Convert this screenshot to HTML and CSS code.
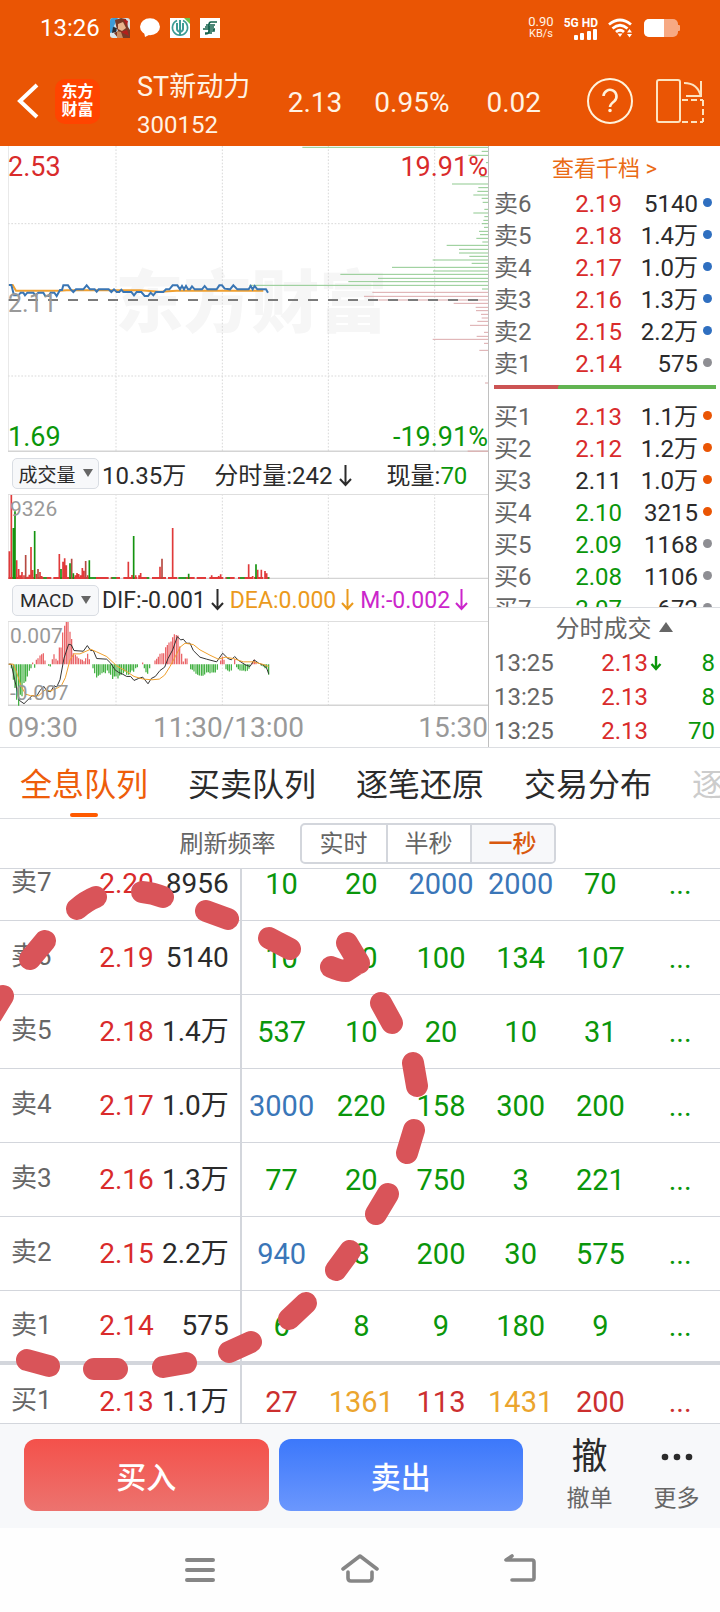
FILE: index.html
```
<!DOCTYPE html>
<html lang="zh-CN">
<head>
<meta charset="utf-8">
<meta name="viewport" content="width=device-width, initial-scale=1">
<title>ST新动力 300152</title>
<link rel="stylesheet" href="styles.css">
</head>
<body>
<div class="page">
  <header class="app-bar">
    <div class="status">
      <span class="clock">13:26</span>
      <svg class="tray" viewBox="0 0 20 20"><rect width="20" height="20" rx="3" fill="#d9e4ea"/><path d="M0 3a3 3 0 0 1 3-3h5L4 8l3 5-7 2z" fill="#3d9bd6"/><path d="M5 2l6-2 5 1 2 8 2 3v8H8l-4-5 4-2-2-5z" fill="#7a3a26"/><path d="M8 6l5-2 3 6-4 3-4-2z" fill="#e9b48c"/><path d="M13 1l5 2-1 5zM11 14l6-2 2 6z" fill="#b3201c"/><path d="M7 13l4 1 2 6H7z" fill="#c98c62"/><path d="M3 9l4 1-1 4-4 1z" fill="#2b2b30"/></svg>
      <svg class="tray" viewBox="0 0 20 20"><ellipse cx="10" cy="8.7" rx="10" ry="8.5" fill="#fff"/><path d="M4 14l1 5 6-3z" fill="#fff"/></svg>
      <svg class="tray" viewBox="0 0 20 20"><rect width="20" height="20" fill="#fff"/><path d="M7 2.6a7.6 7.6 0 1 0 6 0" fill="none" stroke="#3c9c94" stroke-width="1.6"/><path d="M10 2v15M7 5v6q0 2 3 3 3-1 3-3V5" fill="none" stroke="#3c9c94" stroke-width="2"/><path d="M14 0h6v6z" fill="#6cc04a"/></svg>
      <svg class="tray" viewBox="0 0 20 20"><rect width="20" height="20" fill="#fff"/><path d="M17 4h-6q-2 0-2 3H6M15 7h-5M3 11h12M5 9h9M14 11v2H9M12 15H5M9 6v7q0 3-4 3" fill="none" stroke="#14624c" stroke-width="1.700"/></svg>
      <span class="spacer"></span>
      <span class="speed"><b>0.90</b><span>KB/s</span></span>
      <span class="cell"><b>5G HD</b><svg width="24" height="11" viewBox="0 0 24 11" fill="#fff"><rect y="6" width="4" height="5" rx="1"/><rect x="6" y="4" width="4" height="7" rx="1"/><rect x="13" y="2" width="4" height="9" rx="1"/><rect x="19" width="4" height="11" rx="1"/></svg></span>
      <svg class="wifi" viewBox="0 0 26 20" fill="none" stroke="#fff" stroke-width="2.8"><path d="M1 6.500q11-9 22 0M4.500 10.500q7.500-6.500 15 0M8 14q4-3.500 8 0"/><path d="M9.500 15.500h5L12 19z" fill="#fff" stroke="none"/><path d="M19 14.500h5l-2.500-3.500zM19 16h5l-2.500 3.500z" fill="#fff" stroke="none"/></svg>
      <svg class="battery" viewBox="0 0 36 18"><rect width="34" height="18" rx="5" fill="#f7a983"/><rect x="33" y="6" width="3" height="6" rx="1" fill="#f7a983"/><path d="M5 0h15v18H5a5 5 0 0 1-5-5V5a5 5 0 0 1 5-5z" fill="#fff"/></svg>
    </div>
    <div class="title">
      <button class="icon-btn back" aria-label="返回"><svg width="24" height="36" viewBox="0 0 24 36" fill="none" stroke="#fff" stroke-width="4"><path d="M21 2L4 18l17 16"/></svg></button>
      <div class="logo">东方<br>财富</div>
      <div class="stock"><h1>ST新动力</h1><p>300152</p></div>
      <span class="quote q1">2.13</span>
      <span class="quote q2">0.95%</span>
      <span class="quote q3">0.02</span>
      <button class="icon-btn help" aria-label="帮助"><svg width="46" height="46" viewBox="0 0 46 46" fill="none" stroke="#fff3dc" stroke-width="2"><circle cx="23" cy="23" r="22"/><path d="M16.500 18a6.500 6.500 0 1 1 11 5q-4.500 3.500-4.500 6" stroke-width="2.600"/><circle cx="23" cy="32.500" r="1" stroke-width="1.600" fill="#fff"/></svg></button>
      <button class="icon-btn rotate" aria-label="横屏"><svg width="50" height="46" viewBox="0 0 50 46" fill="none" stroke="#fde3c0" stroke-width="2"><rect x="2" y="2" width="23" height="42" rx="2"/><path d="M29 5q14 0 17 14M46 3v15H31"/><path d="M27 22h21M48 22v22M27 44h21" stroke-dasharray="6 3"/></svg></button>
    </div>
  </header>

  <main class="market">
    <section class="charts">
      <div class="plot plot-price">
        <svg viewBox="24 0 1440 918" preserveAspectRatio="none">
          <text x="346" y="544" class="watermark">东方财富</text>
          <path class="grid" d="M348 0V915M667 0V915M985 0V915M1304 0V915M24 233H1464M24 690H1464"/>
          <g transform="translate(840 0)" fill="none">
            <path stroke="#8fc98f" stroke-width="3" d="M67 4H624M605 16H624M565 28H624M618 50H624M600 92H624M516 114H624M595 125H624M592 136H624M580 147H624M605 157H624M608 169H624M613 190H624M580 201H624M613 212H624M610 223H624M606 233H624M612 244H624M597 256H624M600 266H624M589 277H624M607 288H624M500 298H624M537 310H624M537 321H624M568 331H624M458 342H624M575 352H624M336 364H624M459 375H624M181 385H624M294 397H624M205 407H624M-92 418H624M606 429H624"/>
            <path stroke="#dba9ab" stroke-width="3" d="M277 439H624M252 451H624M295 462H624M521 472H624M587 484H624M588 494H624M603 505H624M605 516H624M592 526H624M570 538H624M612 559H624M590 571H624M458 580H624M612 592H624M598 613H624M615 711H624"/>
          </g>
          <path d="M24 462H1464" stroke="#7b7b7b" stroke-width="6" stroke-dasharray="30 30" stroke-dashoffset="0"/>
          <path d="M26 417H38L48 434H180L200 433H420L480 437L530 434H790" fill="none" stroke="#f0a030" stroke-width="6"/>
          <path d="M26 417H34L42 448H55L62 440H70L75 448L82 440H100L106 448L115 440H130L136 450H146L152 440H163L170 450L180 432H186L190 418H204L212 430L220 438L228 430H250L260 418L270 430H284L290 437L296 430H326L334 438L342 430L350 438H358L364 431L370 438H394L402 448L410 438H424L434 450H444L452 440L460 448L468 438H490L498 430H508L518 418H532L540 430L546 420L552 430L558 420L564 430H570L576 421L584 430H606L614 420L622 430H650L658 418H666L674 428L690 430L700 418L712 430H746L752 420L758 430L764 420L772 430H798L804 440" fill="none" stroke="#3a76b4" stroke-width="6"/>
          <path d="M24 0V918" class="frame"/><path d="M24 916H1464" class="frame base"/><path d="M1403 916H1464" stroke="#dbb5b5" stroke-width="5"/>
        </svg>
        <span class="tag tl red">2.53</span><span class="tag tr red">19.91%</span>
        <span class="tag ml">2.11</span>
        <span class="tag bl green">1.69</span><span class="tag br green">-19.91%</span>
      </div>
      <div class="indicator">
        <button class="picker">成交量<i class="caret"></i></button>
        <span class="v1">10.35万</span>
        <span class="v2">分时量:242<svg class="down" viewBox="0 0 13 24"><path d="M6.500 1v20M1 15l5.500 6 5.500-6"/></svg></span>
        <span>现量:<em class="green">70</em></span>
      </div>
      <div class="plot plot-sub">
        <svg viewBox="24 132 1440 255" preserveAspectRatio="none">
          <path class="grid" d="M348 132V387M667 132V387M985 132V387M1304 132V387"/>
          <path d="M24 133H1464M24 132V387" class="frame"/><path d="M24 386H1464" class="frame base"/>
          <path d="M26 384H808" stroke="#e03a3a" stroke-width="6" stroke-dasharray="42 6 28 10"/>
          <path d="M130 384h10M268 384h20M335 384h14M440 384h8M535 384h24M680 384h10M720 384h14M803 384h5" stroke="#2f9a2a" stroke-width="6"/>
          <path stroke="#e03a3a" stroke-width="5" d="M28 387V304M34 387V135M50 387V331M56 387V357M61 387V376M66 387V366M72 387V376M83 387V380M88 387V374M93 387V291M98 387V360M109 387V372M120 387V366M125 387V378M178 387V312M189 387V335M194 387V325M199 387V346M226 387V376M231 387V369M236 387V372M242 387V376M247 387V354M252 387V362M263 387V376M385 387V335M396 387V375M407 387V376M417 387V376M422 387V369M480 387V350M518 387V234M635 387V376M656 387V378M662 387V373M746 387V343M758 387V378M773 387V359M784 387V359M795 387V363M800 387V370"/>
          <path stroke="#b54a42" stroke-width="5" d="M77 387V315M114 387V357M215 387V326M257 387V333M486 387V326"/>
          <path stroke="#14930f" stroke-width="5" d="M40 387V234M45 387V184M104 387V243M183 387V357M210 387V340M220 387V370M268 387V331M401 387V258M566 387V371M768 387V343"/>
        </svg>
        <span class="tag small high">9326</span>
      </div>
      <div class="indicator macd">
        <button class="picker">MACD<i class="caret"></i></button>
        <span>DIF:-0.001<svg class="down" viewBox="0 0 13 24"><path d="M6.500 1v20M1 15l5.500 6 5.500-6"/></svg></span>
        <span class="amber">DEA:0.000<svg class="down" viewBox="0 0 13 24"><path d="M6.500 1v20M1 15l5.500 6 5.500-6"/></svg></span>
        <span class="magenta">M:-0.002<svg class="down" viewBox="0 0 13 24"><path d="M6.500 1v20M1 15l5.500 6 5.500-6"/></svg></span>
      </div>
      <div class="plot plot-sub">
        <svg viewBox="24 513 1440 256" preserveAspectRatio="none">
          <path class="grid" d="M348 513V768M667 513V768M985 513V768M1304 513V768"/>
          <path d="M24 514H1464M24 513V768" class="frame"/><path d="M24 767H1464" class="frame base"/>
          <path stroke="#e8585c" stroke-width="3.500" d="M98 643V638M109 643V630M114 643V625M120 643V617M125 643V613M130 643V610M135 643V632M157 643V628M162 643V613M168 643V627M173 643V632M178 643V593M183 643V593M188 643V548M194 643V527M199 643V516M204 643V516M210 643V545M215 643V567M220 643V610M226 643V615M231 643V620M236 643V625M242 643V628M247 643V630M252 643V634M257 643V625M263 643V612M268 643V628M428 643V638M465 643V632M470 643V627M475 643V621M480 643V612M486 643V610M491 643V610M497 643V592M502 643V585M507 643V578M513 643V575M518 643V562M523 643V553M529 643V555M534 643V557M539 643V590M545 643V612M550 643V635M556 643V626M561 643V626M662 643V632M667 643V620M672 643V630M704 643V628M758 643V636M763 643V630M768 643V638"/>
          <path stroke="#35ab35" stroke-width="3.500" d="M34 643V655M40 643V690M45 643V715M50 643V750M56 643V768M61 643V735M66 643V740M72 643V700M77 643V695M82 643V680M88 643V663M93 643V655M104 643V654M146 643V648M151 643V650M279 643V655M284 643V670M290 643V683M295 643V678M300 643V675M306 643V670M311 643V667M316 643V670M322 643V662M327 643V670M332 643V675M338 643V688M343 643V680M348 643V680M354 643V686M359 643V677M364 643V675M370 643V670M375 643V665M380 643V675M386 643V675M391 643V668M396 643V662M401 643V666M407 643V655M412 643V652M433 643V655M438 643V667M443 643V672M449 643V655M572 643V658M577 643V660M582 643V665M588 643V672M593 643V675M598 643V677M604 643V678M609 643V678M614 643V674M620 643V668M625 643V667M630 643V670M636 643V668M641 643V668M646 643V668M652 643V660M678 643V658M683 643V662M688 643V665M694 643V662M710 643V652M715 643V658M720 643V662M726 643V663M731 643V662M736 643V664M742 643V663M747 643V657M784 643V648M790 643V650M795 643V655M800 643V655M806 643V675"/>
          <path d="M26 643H34L44 690L58 752L72 762L84 750L96 738L110 740L120 722L132 710L140 724L152 726L162 708L170 712L180 690L192 625L206 583L214 585L222 602L250 604L262 587L272 602H280L290 626L320 628L332 640L345 660L356 668L366 672L380 680H392L402 692L416 686L428 682L444 702L454 686L466 680L480 662L494 652L504 626L518 600L532 560L542 570L550 568L560 580H570L580 602L600 622L620 628L650 636L668 610L684 626L694 630L704 620L716 632L736 645L750 650L762 630L776 640L790 646L800 655L806 672" fill="none" stroke="#333" stroke-width="3"/>
          <path d="M26 643H40L50 668L62 705L76 733L92 738H116L136 720L150 724L170 716L184 708L196 684L210 630L222 612H240L272 598L290 606L320 620L350 648L380 665L402 680L430 688L456 690L478 688L494 676L510 650L526 620L540 592L555 580L580 584L600 600L630 616L655 628L676 622L700 626L730 636H760L790 644L806 650" fill="none" stroke="#efa02c" stroke-width="3"/>
        </svg>
        <span class="tag small high">0.007</span><span class="tag small low">-0.007</span>
      </div>
      <div class="axis"><span>09:30</span><span>11:30/13:00</span><span>15:30</span></div>
    </section>

    <aside class="book">
      <a class="more-levels" href="#">查看千档 &gt;</a>
      <div class="levels">
        <div class="lv"><span>卖6</span><span class="red">2.19</span><span>5140</span><i class="dot blue-dot"></i></div>
        <div class="lv"><span>卖5</span><span class="red">2.18</span><span>1.4万</span><i class="dot blue-dot"></i></div>
        <div class="lv"><span>卖4</span><span class="red">2.17</span><span>1.0万</span><i class="dot blue-dot"></i></div>
        <div class="lv"><span>卖3</span><span class="red">2.16</span><span>1.3万</span><i class="dot blue-dot"></i></div>
        <div class="lv"><span>卖2</span><span class="red">2.15</span><span>2.2万</span><i class="dot blue-dot"></i></div>
        <div class="lv"><span>卖1</span><span class="red">2.14</span><span>575</span><i class="dot"></i></div>
        <div class="ratio"></div>
        <div class="lv"><span>买1</span><span class="red">2.13</span><span>1.1万</span><i class="dot orange-dot"></i></div>
        <div class="lv"><span>买2</span><span class="red">2.12</span><span>1.2万</span><i class="dot orange-dot"></i></div>
        <div class="lv"><span>买3</span><span>2.11</span><span>1.0万</span><i class="dot orange-dot"></i></div>
        <div class="lv"><span>买4</span><span class="green">2.10</span><span>3215</span><i class="dot orange-dot"></i></div>
        <div class="lv"><span>买5</span><span class="green">2.09</span><span>1168</span><i class="dot"></i></div>
        <div class="lv"><span>买6</span><span class="green">2.08</span><span>1106</span><i class="dot"></i></div>
        <div class="lv"><span>买7</span><span class="green">2.07</span><span>672</span><i class="dot"></i></div>
      </div>
      <div class="trades">
        <button class="trades-head">分时成交<i class="caret up"></i></button>
        <div class="tr-row"><span>13:25</span><span class="red">2.13</span><svg viewBox="0 0 12 16"><path d="M6 1v13M1.500 9L6 14l4.500-5" fill="none" stroke="#0a960a" stroke-width="2.400"/></svg><span class="green">8</span></div>
        <div class="tr-row"><span>13:25</span><span class="red">2.13</span><i></i><span class="green">8</span></div>
        <div class="tr-row"><span>13:25</span><span class="red">2.13</span><i></i><span class="green">70</span></div>
      </div>
    </aside>
  </main>

  <nav class="tabs">
    <button class="tab active">全息队列</button><button class="tab">买卖队列</button><button class="tab">逐笔还原</button><button class="tab">交易分布</button><button class="tab faded">逐</button>
  </nav>

  <div class="rate">
    <span>刷新频率</span>
    <div class="segments"><button>实时</button><button>半秒</button><button class="on">一秒</button></div>
  </div>

  <section class="queue">
    <table>
      <colgroup><col class="c-name"><col class="c-price"><col class="c-vol"><col span="6" class="c-q"></colgroup>
      <tbody>
        <tr><th>卖7</th><td>2.20</td><td>8956</td><td>10</td><td>20</td><td class="blue">2000</td><td class="blue">2000</td><td>70</td><td>...</td></tr>
        <tr><th>卖6</th><td>2.19</td><td>5140</td><td>10</td><td>10</td><td>100</td><td>134</td><td>107</td><td>...</td></tr>
        <tr><th>卖5</th><td>2.18</td><td>1.4万</td><td>537</td><td>10</td><td>20</td><td>10</td><td>31</td><td>...</td></tr>
        <tr><th>卖4</th><td>2.17</td><td>1.0万</td><td class="blue">3000</td><td>220</td><td>158</td><td>300</td><td>200</td><td>...</td></tr>
        <tr><th>卖3</th><td>2.16</td><td>1.3万</td><td>77</td><td>20</td><td>750</td><td>3</td><td>221</td><td>...</td></tr>
        <tr><th>卖2</th><td>2.15</td><td>2.2万</td><td class="blue">940</td><td>8</td><td>200</td><td>30</td><td>575</td><td>...</td></tr>
        <tr class="last-sell"><th>卖1</th><td>2.14</td><td>575</td><td>6</td><td>8</td><td>9</td><td>180</td><td>9</td><td>...</td></tr>
        <tr class="buy"><th>买1</th><td>2.13</td><td>1.1万</td><td>27</td><td class="gold">1361</td><td>113</td><td class="gold">1431</td><td>200</td><td>...</td></tr>
      </tbody>
    </table>
    <svg class="marker" viewBox="0 869 720 555" fill="none" stroke="#d95459" stroke-width="22" stroke-linecap="round" stroke-linejoin="round">
      <path d="M3 996L-8 1014M45 941L30 959M96 897Q86 901 77 909M142 892Q153 893 163 897M206 911L228 919M269 938L290 949M347 943L359 963M331 967Q340 971 346 971L358 963M381 1003L392 1023M413 1063L417 1086M414 1130L407 1153M388 1194L376 1214M350 1251L336 1270M306 1303L289 1319M251 1342L229 1352M186 1363L163 1367M117 1369H94M49 1366L27 1360"/>
    </svg>
  </section>

  <footer class="actions">
    <button class="trade buy-btn">买入</button>
    <button class="trade sell-btn">卖出</button>
    <button class="act cancel"><span class="glyph">撤</span><span>撤单</span></button>
    <button class="act"><span class="glyph"><svg width="32" height="8" viewBox="0 0 32 8" fill="#2b2b2b"><circle cx="4" cy="4" r="3.300"/><circle cx="16" cy="4" r="3.300"/><circle cx="28" cy="4" r="3.300"/></svg></span><span>更多</span></button>
  </footer>

  <nav class="system">
    <button class="icon-btn" aria-label="任务"><svg width="40" height="32" viewBox="0 0 40 32" stroke="#868686" stroke-width="4" stroke-linecap="round"><path d="M7 6h26M7 16h26M7 26h26"/></svg></button>
    <button class="icon-btn" aria-label="主页"><svg width="40" height="32" viewBox="0 0 40 32" fill="none" stroke="#868686" stroke-width="3.600" stroke-linecap="round" stroke-linejoin="round"><path d="M3 15L20 2l17 13M8 18v6q0 3 3 3h18q3 0 3-3v-6"/></svg></button>
    <button class="icon-btn" aria-label="返回"><svg width="40" height="32" viewBox="0 0 40 32" fill="none" stroke="#868686" stroke-width="3.600" stroke-linecap="round" stroke-linejoin="round"><path d="M12 2L6 6h26q2 0 2 2v16q0 2-2 2H12"/></svg></button>
  </nav>
</div>
</body>
</html>
```
FILE: styles.css
```
* { box-sizing: border-box; }
body {
  margin: 0;
  background: #fff;
  color: #2b2b2b;
  font-family: Roboto, "Noto Sans CJK SC", sans-serif;
}
button { font: inherit; color: inherit; background: none; border: 0; padding: 0; }
em, i { font-style: normal; }
.page { display: flex; flex-direction: column; height: 100vh; overflow: hidden; }
.red { color: #d92b2b; }
.green { color: #0a960a; }
.amber { color: #eb9a1c; }
.magenta { color: #cb25cb; }
.spacer { flex: 1; }

.app-bar { background: #ea5504; color: #fff3e4; height: 146px; flex: none; }
.status { display: flex; align-items: center; gap: 10px; height: 56px; padding: 0 40px; }
.clock { font-size: 24px; color: #fff; }
.tray { width: 20px; height: 20px; }
.speed, .cell { display: flex; flex-direction: column; align-items: center; }
.speed { font-size: 11px; line-height: 12px; }
.speed b { font-weight: 400; font-size: 13px; }
.cell { align-items: flex-end; font-size: 12px; line-height: 12px; color: #fff; }
.wifi { width: 26px; height: 20px; }
.battery { width: 36px; height: 18px; }
.title { display: flex; align-items: center; height: 90px; }
.icon-btn { display: grid; place-items: center; }
.back { margin-left: 16px; }
.logo {
  margin-left: 15px; width: 45px; height: 45px; border-radius: 10px;
  background: #ff4400; color: #fff; font-size: 16px; font-weight: 700; line-height: 18px;
  display: grid; place-content: center;
}
.stock { flex: 1; margin-left: 37px; padding-top: 9px; }
.stock h1 { margin: 0; font-size: 27px; font-weight: 400; line-height: 38px; }
.stock p { margin: 0; font-size: 24px; line-height: 38px; }
.quote { font-size: 28px; margin-right: 32px; padding-top: 3px; }
.q2 { margin-right: 37px; }
.q3 { margin-right: 46px; }
.rotate { margin: 0 15px 0 22px; }

.market { display: flex; height: 602px; flex: none; border-bottom: 1px solid #dcdee2; }
.charts { flex: 1; padding-left: 8px; }
.plot { position: relative; }
.plot svg { display: block; width: 100%; height: 100%; }
.plot-price { height: 306px; }
.plot-sub { height: 85px; }
.grid { stroke: #d9d9d9; stroke-width: 3; stroke-dasharray: 5 5; fill: none; }
.frame { stroke: #dedede; stroke-width: 4; fill: none; }
.base { stroke: #d4d4d4; stroke-width: 5; }
.watermark { font-size: 204px; font-weight: 900; fill: #f6f6f6; }
.tag { position: absolute; font-size: 27px; line-height: 30px; color: #999; }
.tag.red { color: #d92b2b; }
.tag.green { color: #0a960a; }
.tl, .ml, .bl { left: 0; }
.tr, .br { right: 0; }
.tl, .tr { top: 6px; }
.ml { top: 143px; font-size: 25px; }
.bl, .br { bottom: 0; }
.small { font-size: 21px; line-height: 26px; left: 2px; }
.small.high { top: 2px; }
.small.low { bottom: 0; }
.indicator { display: flex; align-items: center; height: 42px; padding-left: 4px; gap: 3px; font-size: 24px; white-space: nowrap; }
.picker {
  width: 87px; height: 31px; border: 1px solid #d9dde3; border-radius: 5px; background: #f7f8fa;
  display: flex; align-items: center; justify-content: center; gap: 7px; font-size: 19px;
}
.caret { border: 5px solid transparent; border-top: 8px solid #666; border-bottom: 0; }
.caret.up { border: 7px solid transparent; border-bottom: 10px solid #666; border-top: 0; }
.v1 { margin-right: 25px; }
.v2 { margin-right: 32px; }
.down { width: 13px; height: 24px; margin-left: 6px; vertical-align: -4px; fill: none; stroke: currentColor; stroke-width: 2; }
.macd { font-size: 23px; gap: 6px; }
.macd .picker { margin-right: -3px; }
.macd .down { margin-left: 5px; }
.axis { display: grid; grid-template-columns: 1fr 2fr 1fr; height: 42px; line-height: 44px; font-size: 28px; color: #999; }
.axis span:nth-child(2) { padding-left: 25px; }
.axis span:last-child { text-align: right; }

.book { width: 232px; border-left: 1px solid #c0c0c0; display: flex; flex-direction: column; font-size: 24px; }
.more-levels { height: 41px; line-height: 45px; text-align: center; font-size: 22px; color: #ea6a14; text-decoration: none; }
.levels { flex: 1; min-height: 0; overflow: hidden; }
.lv { display: grid; grid-template-columns: 50px 78px 76px 1fr; align-items: center; height: 32px; line-height: 34px; padding-left: 5px; }
.lv span + span { text-align: right; }
.lv span:first-child { color: #666; }
.dot { width: 9px; height: 9px; border-radius: 50%; background: #8e8e93; margin: -4px 0 0 5px; }
.blue-dot { background: #2f6fc0; }
.orange-dot { background: #ea5504; }
.ratio { height: 4px; margin: 6px 4px 11px 5px; background: linear-gradient(110deg, #cc5454 0 29%, #62b452 29%); }
.trades { border-top: 1px solid #dcdee2; }
.trades-head { width: 100%; height: 37px; display: flex; align-items: center; justify-content: center; gap: 7px; color: #666; padding-left: 19px; }
.tr-row { display: grid; grid-template-columns: 75px 79px 14px 1fr; align-items: center; height: 34px; line-height: 36px; padding: 0 5px; }
.tr-row span:first-child { color: #666; }
.tr-row span + span, .tr-row span:last-child { text-align: right; }
.tr-row svg { width: 12px; height: 16px; margin-left: 2px; }

.tabs { display: flex; gap: 40px; height: 71px; flex: none; padding-left: 20px; border-bottom: 1px solid #dcdee2; font-size: 32px; overflow: hidden; }
.tab { flex: none; position: relative; padding-bottom: 2px; }
.active { color: #ee5d0a; }
.active::after { content: ""; position: absolute; left: 50%; bottom: 1px; width: 28px; height: 4px; margin-left: -14px; border-radius: 2px; background: #ff5a00; }
.faded { color: #ccc; }
.rate { display: flex; align-items: center; justify-content: center; gap: 24px; height: 50px; flex: none; border-bottom: 1px solid #d3d6dc; font-size: 24px; line-height: 32px; color: #666; padding-left: 15px; }
.segments { display: flex; border: 2px solid #d3d6dc; border-radius: 5px; overflow: hidden; height: 41px; }
.segments button { width: 84px; }
.segments button + button { border-left: 2px solid #d3d6dc; }
.segments .on { background: #f7f8fa; color: #d9590e; font-weight: 500; }

.queue { position: relative; flex: 1; min-height: 0; overflow: hidden; }
.queue table { width: 100%; margin-top: -22px; border-collapse: separate; border-spacing: 0; table-layout: fixed; font-size: 28px; line-height: 32px; }
.c-name { width: 11.5%; }
.c-price { width: 9.861%; }
.c-vol { width: 12.222%; }
.c-q { width: 11.0695%; }
.queue tr { height: 74px; }
.queue th, .queue td { padding: 0; border-bottom: 1px solid #d3d6dc; text-align: center; color: #0a960a; white-space: nowrap; font-weight: 400; }
.queue th { text-align: left; padding: 0 0 3px 11px; font-size: 26px; color: #666; }
.queue td:nth-child(2) { text-align: right; color: #d92b2b; }
.queue td:nth-child(3) { text-align: right; padding-right: 11px; border-right: 2px solid #d3d6dc; color: #2b2b2b; }
.queue td:nth-child(n+4) { font-size: 29px; }
.queue .last-sell th, .queue .last-sell td { border-bottom: 4px solid #d3d6dc; }
.queue .buy td:nth-child(n+4) { color: #cc2f2f; }
.queue td.blue { color: #3a76b8; }
.queue .buy td.gold { color: #eba52e; }
.marker { position: absolute; top: 0; left: 0; width: 100%; pointer-events: none; }

.actions { display: flex; height: 105px; flex: none; padding: 15px 0 17px 24px; background: #f7f8fa; border-top: 1px solid #d3d6dc; }
.trade { flex: 1; border-radius: 12px; color: #fff; font-size: 30px; font-weight: 500; margin-right: 10px; }
.buy-btn { background: linear-gradient(#f4514b, #ec736f); }
.sell-btn { background: linear-gradient(#3c78fb, #6b97fd); }
.act { width: 87px; display: flex; flex-direction: column; align-items: center; justify-content: space-between; font-size: 23px; line-height: 24px; color: #666; }
.cancel { margin-left: 13px; }
.glyph { height: 36px; font-size: 36px; line-height: 36px; color: #2b2b2b; display: grid; place-items: center; }
.system { display: flex; justify-content: center; gap: 120px; height: 84px; flex: none; background: #fefefe; }
```
